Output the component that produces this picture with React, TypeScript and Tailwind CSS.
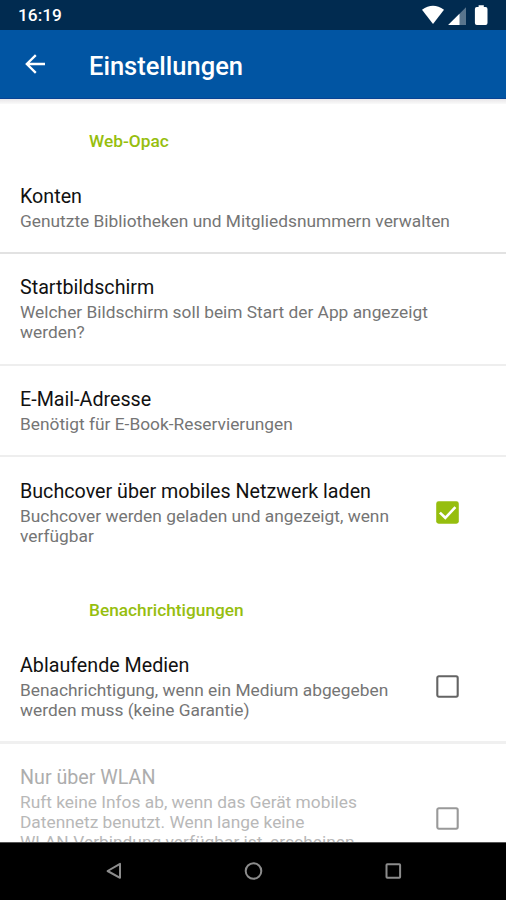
import type { ReactNode } from 'react';

type CheckState = 'on' | 'off' | 'disabled';

function Checkbox({ state }: { state: CheckState }) {
  if (state === 'on') {
    return (
      <svg className="size-[23px]" viewBox="0 0 23 23" fill="none">
        <rect x="0.2" y="0.3" width="22.6" height="22.4" rx="2.4" fill="#96be0e" />
        <path d="M3.9 11.6l5.4 5.2L19.4 6.2" stroke="#fff" strokeWidth="2.6" />
      </svg>
    );
  }
  return (
    <svg className="size-[23px]" viewBox="0 0 23 23" fill="none">
      <rect x="1.3" y="1.3" width="20.4" height="20.4" rx="1.6" stroke={state === 'off' ? '#646464' : '#999999'} strokeWidth="2.1" />
    </svg>
  );
}

function Section({ children }: { children: ReactNode }) {
  return <h2 className="pl-[89px] text-[17.3px] leading-[22px] font-medium text-[#96be0e]">{children}</h2>;
}

interface RowProps {
  title: string;
  lines: string[];
  check?: CheckState;
  box: string;
}

function Row({ title, lines, check, box }: RowProps) {
  const disabled = check === 'disabled';
  return (
    <div className={`flex shrink-0 items-center justify-between pl-5 pr-[47px] ${box}`}>
      <div className="self-start pt-[21px] whitespace-nowrap">
        <div className={`text-[19.7px] leading-[25px] ${disabled ? 'text-[#adadad]' : 'text-[#111111]'}`}>{title}</div>
        <div className={`mt-[2px] text-[17.33px] leading-5 ${disabled ? 'text-[#b8b8b8]' : 'text-[#757575]'}`}>
          {lines.map((line) => (
            <div key={line}>{line}</div>
          ))}
        </div>
      </div>
      {check && <Checkbox state={check} />}
    </div>
  );
}

export default function App() {
  return (
    <div className="flex h-[900px] w-[506px] flex-col overflow-hidden bg-white font-['Roboto','Noto_Sans',sans-serif]">
      <div className="flex h-[30px] shrink-0 items-center justify-between bg-[#012b50] pl-[18px] pr-[18px] text-white">
        <span className="pt-[2px] text-[17.3px] font-medium">16:19</span>
        <svg className="h-[30px] w-[68px]" viewBox="420 0 68 30">
          <path d="M422 9.8Q433 1.6 444 9.8L433 24z" fill="#fff" />
          <path d="M466 7.2V25H448.2z" fill="#fff" fillOpacity="0.35" />
          <path d="M459.5 13.7V25H448.2z" fill="#fff" />
          <path d="M476.8 7h1.8V5.3h5.2V7h1.8q1.9 0 1.9 1.9v14.2q0 1.9-1.9 1.9h-8.8q-1.9 0-1.9-1.9V8.9q0-1.9 1.9-1.9z" fill="#fff" />
        </svg>
      </div>
      <header className="flex h-[69px] shrink-0 items-center border-b border-[#084394] bg-[#0155a3] text-white">
        <svg className="ml-[25px] h-5 w-5" viewBox="0 0 20 20" fill="none" stroke="#fff" strokeWidth="2.3">
          <path d="M20 10H2.2M10.8 1.1L1.8 10l9 8.9" />
        </svg>
        <h1 className="ml-[44px] pt-[3px] text-[25.5px] leading-[30px] font-medium">Einstellungen</h1>
      </header>
      <main className="flex min-h-0 flex-1 flex-col overflow-hidden">
        <div className="h-[5px] shrink-0 bg-linear-to-b from-[#e8e6e8] to-[#fafafa]" />
        <div className="mt-[26px]">
          <Section>Web-Opac</Section>
        </div>
        <div className="mt-[11px]">
          <Row title="Konten" lines={['Genutzte Bibliotheken und Mitgliedsnummern verwalten']} box="h-[91px] border-b-2 border-[#e2e2e2]" />
          <Row title="Startbildschirm" lines={['Welcher Bildschirm soll beim Start der App angezeigt', 'werden?']} box="h-[112px] border-b-2 border-[#eeeeee]" />
          <Row title="E-Mail-Adresse" lines={['Benötigt für E-Book-Reservierungen']} box="h-[91px] border-b-2 border-[#eeeeee]" />
          <Row title="Buchcover über mobiles Netzwerk laden" lines={['Buchcover werden geladen und angezeigt, wenn', 'verfügbar']} check="on" box="h-[109px] pt-px" />
        </div>
        <div className="mt-[33px]">
          <Section>Benachrichtigungen</Section>
        </div>
        <div className="mt-[11px]">
          <Row title="Ablaufende Medien" lines={['Benachrichtigung, wenn ein Medium abgegeben', 'werden muss (keine Garantie)']} check="off" box="h-[112px] border-b-3 border-[#f0f0f0]" />
          <Row title="Nur über WLAN" lines={['Ruft keine Infos ab, wenn das Gerät mobiles', 'Datennetz benutzt. Wenn lange keine', 'WLAN-Verbindung verfügbar ist, erscheinen']} check="disabled" box="h-[148px]" />
        </div>
      </main>
      <nav className="h-[58px] shrink-0 border-t border-[#555555] bg-black">
        <svg className="h-[57px] w-[506px]" viewBox="0 843 506 57" fill="none" stroke="#8c8c8c" strokeWidth="2">
          <path d="M120 863.8v14L107.6 871z" strokeLinejoin="round" />
          <circle cx="253.5" cy="871" r="7.8" />
          <rect x="386.5" y="864.2" width="13.6" height="13.6" rx="0.8" />
        </svg>
      </nav>
    </div>
  );
}
